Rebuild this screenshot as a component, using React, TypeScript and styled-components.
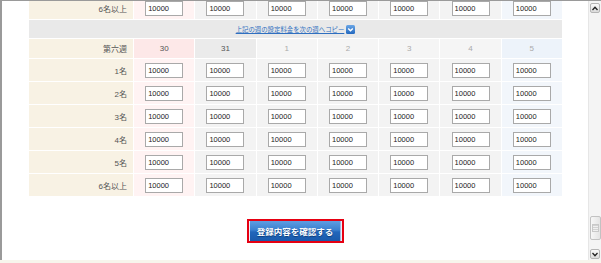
import React from 'react';
import styled, { createGlobalStyle } from 'styled-components';

const GlobalStyle = createGlobalStyle`
  html, body {
    margin: 0;
    padding: 0;
  }
  body {
    width: 601px;
    height: 263px;
    overflow: hidden;
    background: #f7f5ec;
    font-family: "Liberation Sans", "Noto Sans CJK JP", sans-serif;
  }
`;

const Frame = styled.div`
  display: flex;
  height: 260px;
  box-sizing: border-box;
  border-top: 1px solid #9a9a9a;
  border-left: 2px solid #9a9a9a;
  background: #fff;
`;

const Page = styled.div`
  flex: 1;
  overflow: hidden;
  padding-left: 27px;
`;

const Table = styled.div`
  width: 533px;
  display: flex;
  flex-direction: column;
  gap: 1px;
  margin-top: -4px;
`;

const Row = styled.div<{ $h: number }>`
  display: grid;
  grid-template-columns: 104px repeat(7, 1fr);
  column-gap: 1px;
  height: ${(p) => p.$h}px;
`;

const LabelCell = styled.div`
  background: #f8f2e4;
  display: flex;
  align-items: center;
  justify-content: flex-end;
  padding-right: 6px;
  font-size: 8px;
  color: #555;
`;

type Tone = 'sun' | 'cur' | 'next' | 'sat';

const headBg: Record<Tone, string> = {
  sun: '#fde8e8',
  cur: '#ebebeb',
  next: '#f5f5f5',
  sat: '#edf3fa',
};

const bodyBg: Record<Tone, string> = {
  sun: '#fff3f3',
  cur: '#f3f3f3',
  next: '#f3f3f3',
  sat: '#f2f6fb',
};

const HeadCell = styled.div<{ $tone: Tone }>`
  background: ${(p) => headBg[p.$tone]};
  display: flex;
  align-items: center;
  justify-content: center;
  font-size: 8px;
  color: ${(p) => (p.$tone === 'sun' || p.$tone === 'cur' ? '#555' : '#aaa')};
`;

const DataCell = styled.div<{ $tone: Tone }>`
  background: ${(p) => bodyBg[p.$tone]};
  display: flex;
  align-items: center;
  justify-content: center;
`;

const PriceInput = styled.input`
  box-sizing: border-box;
  width: 38px;
  height: 15px;
  margin: 0;
  padding: 0 2px;
  border: 1px solid #a9a9a9;
  background: #fff;
  font-family: "Liberation Sans", sans-serif;
  font-size: 7.5px;
  color: #222;
  outline: none;
`;

const CopyRow = styled.div`
  height: 18px;
  background: #e9e9e9;
  display: flex;
  align-items: center;
  justify-content: center;
  gap: 2px;
`;

const CopyLink = styled.a`
  font-size: 6.4px;
  color: #2f6fc0;
  text-decoration: underline;
  white-space: nowrap;
`;

const ButtonArea = styled.div`
  width: 533px;
  display: flex;
  justify-content: center;
  margin-top: 23px;
`;

const RedFrame = styled.div`
  border: 2px solid #e60012;
  padding: 0 1px;
  background: #e8f0fa;
  display: flex;
`;

const SubmitButton = styled.button`
  width: 91px;
  height: 20px;
  margin: 0;
  padding: 0;
  border: none;
  border-right: 1px solid #9cbde6;
  background: linear-gradient(#5e9de2 0%, #3b80cf 45%, #2166bb 55%, #1a5aab 100%);
  color: #fff;
  font-family: "Noto Sans CJK JP", sans-serif;
  font-size: 8.5px;
  font-weight: 700;
  text-shadow: 0 1px 1px #0b3a78;
  cursor: pointer;
`;

const ScrollBar = styled.div`
  width: 12px;
  display: flex;
  flex-direction: column;
  align-items: center;
  border-left: 1px solid #e6e6e6;
  background: #f4f4f4;
  padding: 2px 0 1px;
`;

const ArrowButton = styled.div`
  box-sizing: border-box;
  width: 10px;
  height: 10px;
  border: 1px solid #b5b5b5;
  border-radius: 2px;
  background: linear-gradient(#fafafa, #dcdcdc);
  display: flex;
  align-items: center;
  justify-content: center;
`;

const Track = styled.div`
  flex: 1;
  width: 100%;
  display: flex;
  flex-direction: column;
  justify-content: flex-end;
  align-items: center;
  padding-bottom: 9px;
`;

const Thumb = styled.div`
  box-sizing: border-box;
  width: 11px;
  height: 24px;
  border: 1px solid #c2c2c2;
  border-radius: 2px;
  background: linear-gradient(90deg, #f7f7f7, #e4e4e4);
  display: flex;
  align-items: center;
  justify-content: center;
`;

const Grip = styled.div`
  width: 5px;
  height: 6px;
  border: 1px solid #c8c8c8;
  background: repeating-linear-gradient(#d2d2d2 0 1px, #f0f0f0 1px 2px);
`;

const days: { label: string; tone: Tone }[] = [
  { label: '30', tone: 'sun' },
  { label: '31', tone: 'cur' },
  { label: '1', tone: 'next' },
  { label: '2', tone: 'next' },
  { label: '3', tone: 'next' },
  { label: '4', tone: 'next' },
  { label: '5', tone: 'sat' },
];

const people = ['1名', '2名', '3名', '4名', '5名', '6名以上'];

const PriceRow: React.FC<{ label: string }> = ({ label }) => (
  <Row $h={22}>
    <LabelCell>{label}</LabelCell>
    {days.map((d, i) => (
      <DataCell key={i} $tone={d.tone}>
        <PriceInput defaultValue="10000" />
      </DataCell>
    ))}
  </Row>
);

const CopyIcon = () => (
  <svg width="9" height="9" viewBox="0 0 9 9">
    <defs>
      <linearGradient id="cg" x1="0" y1="0" x2="0" y2="1">
        <stop offset="0" stopColor="#6aa6e6" />
        <stop offset="1" stopColor="#2268bf" />
      </linearGradient>
    </defs>
    <rect x="0" y="0" width="9" height="9" rx="1.5" fill="url(#cg)" />
    <path d="M2.2 3.4 L4.5 5.8 L6.8 3.4" fill="none" stroke="#fff" strokeWidth="1.4" />
  </svg>
);

const Chevron = ({ up }: { up?: boolean }) => (
  <svg width="6" height="5" viewBox="0 0 6 5">
    <path d={up ? 'M0.5 4 L3 1.3 L5.5 4' : 'M0.5 1 L3 3.7 L5.5 1'} fill="none" stroke="#222" strokeWidth="1.3" />
  </svg>
);

const App: React.FC = () => {
  return (
    <>
      <GlobalStyle />
      <Frame>
        <Page>
          <Table>
            <PriceRow label="6名以上" />
            <CopyRow>
              <CopyLink href="#">上記の週の設定料金を次の週へコピー</CopyLink>
              <CopyIcon />
            </CopyRow>
            <Row $h={19}>
              <LabelCell>第六週</LabelCell>
              {days.map((d, i) => (
                <HeadCell key={i} $tone={d.tone}>{d.label}</HeadCell>
              ))}
            </Row>
            {people.map((p) => (
              <PriceRow key={p} label={p} />
            ))}
          </Table>
          <ButtonArea>
            <RedFrame>
              <SubmitButton>登録内容を確認する</SubmitButton>
            </RedFrame>
          </ButtonArea>
        </Page>
        <ScrollBar>
          <ArrowButton><Chevron up /></ArrowButton>
          <Track>
            <Thumb><Grip /></Thumb>
          </Track>
          <ArrowButton><Chevron /></ArrowButton>
        </ScrollBar>
      </Frame>
    </>
  );
};

export default App;
